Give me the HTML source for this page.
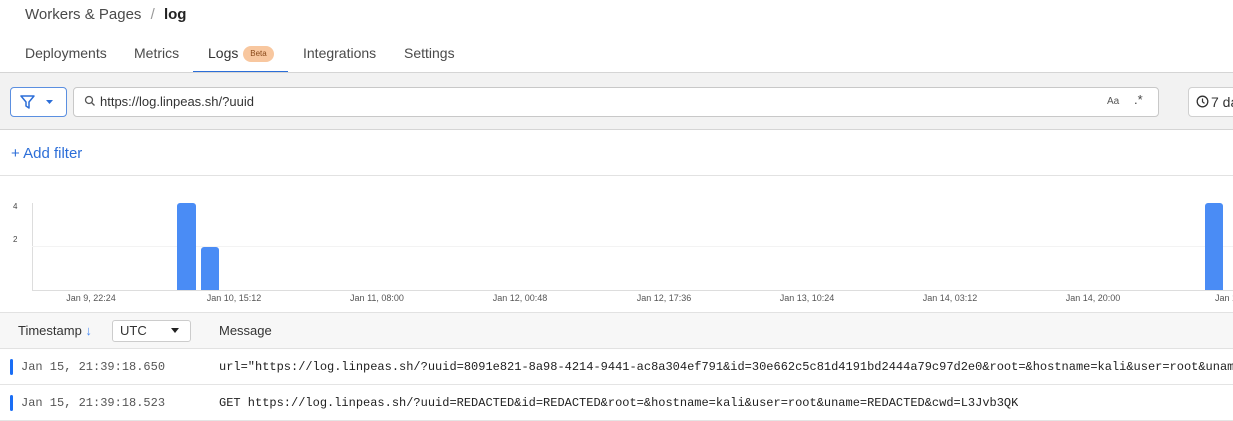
<!DOCTYPE html>
<html><head><meta charset="utf-8"><style>
*{box-sizing:border-box;margin:0;padding:0}
body{width:1233px;height:421px;overflow:hidden;background:#fff;font-family:"Liberation Sans",sans-serif;color:#36393a;position:relative}
.a{position:absolute;white-space:nowrap}
.mono{font-family:"Liberation Mono","DejaVu Sans Mono",monospace;font-size:12px;overflow:hidden}
.xl{font-size:9px;color:#555;top:293px;transform:translateX(-50%)}
.t{font-size:14px;color:#4a4a4a;top:45px}
</style></head><body>
<div class="a" style="left:25px;top:6px;font-size:15px;color:#4a4a4a">Workers &amp; Pages <span style="color:#999;margin:0 5px">/</span> <b style="color:#222">log</b></div>
<div class="a t" style="left:25px">Deployments</div>
<div class="a t" style="left:134px">Metrics</div>
<div class="a t" style="left:208px;color:#333">Logs</div>
<div class="a" style="left:243px;top:46px;width:31px;height:16px;border-radius:8px;background:#f8c79f;font-size:8px;color:#8a4a1a;text-align:center;line-height:16px">Beta</div>
<div class="a" style="left:193px;top:71px;width:95px;height:2px;background:#2c6ed8"></div>
<div class="a t" style="left:303px">Integrations</div>
<div class="a t" style="left:404px">Settings</div>
<div class="a" style="left:0;top:72px;width:1233px;height:58px;background:#f2f2f2;border-top:1px solid #d5d5d5;border-bottom:1px solid #d5d5d5"></div>
<div class="a" style="left:10px;top:87px;width:57px;height:30px;border:1px solid #5b8fe0;border-radius:4px;background:#fff"></div>
<svg class="a" style="left:20px;top:94px" width="40" height="16"><path d="M1 2h13l-5 6v6l-3-2v-4z" fill="none" stroke="#2c6ed8" stroke-width="1.5" stroke-linejoin="round"/><path d="M26 6h7l-3.5 4z" fill="#2c6ed8"/></svg>
<div class="a" style="left:73px;top:87px;width:1086px;height:30px;border:1px solid #c8c8c8;border-radius:4px;background:#fff"></div>
<svg class="a" style="left:84px;top:95px" width="12" height="12"><circle cx="5" cy="5" r="3.5" fill="none" stroke="#555" stroke-width="1.3"/><path d="M7.5 7.5l3 3" stroke="#555" stroke-width="1.3"/></svg>
<div class="a" style="left:100px;top:94px;font-size:13px;color:#333">https://log.linpeas.sh/?uuid</div>
<div class="a" style="left:1107px;top:96px;font-size:10px;color:#555">Aa</div>
<div class="a" style="left:1134px;top:92px;font-size:13px;color:#444">.*</div>
<div class="a" style="left:1188px;top:87px;width:60px;height:30px;border:1px solid #d0d0d0;border-radius:4px;background:#fff;font-size:14px;line-height:28px;padding-left:22px;color:#333;overflow:hidden">7 days</div>
<svg class="a" style="left:1196px;top:95px" width="13" height="13"><circle cx="6.5" cy="6.5" r="5.3" fill="none" stroke="#333" stroke-width="1.3"/><path d="M6.5 3.5v3.3l2 1.6" fill="none" stroke="#333" stroke-width="1.2"/></svg>
<div class="a" style="left:11px;top:145px;font-size:15px;color:#2c6ed8">+ Add filter</div>
<div class="a" style="left:0;top:175px;width:1233px;height:1px;background:#e2e2e2"></div>
<div class="a" style="left:13px;top:202px;font-size:8px;color:#444">4</div>
<div class="a" style="left:13px;top:235px;font-size:8px;color:#444">2</div>
<div class="a" style="left:32px;top:203px;width:1px;height:88px;background:#ddd"></div>
<div class="a" style="left:32px;top:246px;width:1201px;height:1px;background:#f3f3f3"></div>
<div class="a" style="left:32px;top:290px;width:1201px;height:1px;background:#ddd"></div>
<div class="a" style="left:177px;top:203px;width:19px;height:87px;background:#4a8cf5;border-radius:3px 3px 0 0"></div>
<div class="a" style="left:201px;top:247px;width:18px;height:43px;background:#4a8cf5;border-radius:3px 3px 0 0"></div>
<div class="a" style="left:1205px;top:203px;width:18px;height:87px;background:#4a8cf5;border-radius:3px 3px 0 0"></div>
<div class="a xl" style="left:91px">Jan 9, 22:24</div>
<div class="a xl" style="left:234px">Jan 10, 15:12</div>
<div class="a xl" style="left:377px">Jan 11, 08:00</div>
<div class="a xl" style="left:520px">Jan 12, 00:48</div>
<div class="a xl" style="left:664px">Jan 12, 17:36</div>
<div class="a xl" style="left:807px">Jan 13, 10:24</div>
<div class="a xl" style="left:950px">Jan 14, 03:12</div>
<div class="a xl" style="left:1093px">Jan 14, 20:00</div>
<div class="a xl" style="left:1215px;transform:none;width:18px;overflow:hidden">Jan 1</div>
<div class="a" style="left:0;top:312px;width:1233px;height:37px;background:#f7f7f7;border-top:1px solid #e2e2e2;border-bottom:1px solid #e2e2e2"></div>
<div class="a" style="left:18px;top:323px;font-size:13px;color:#333">Timestamp <span style="color:#4a8cf5">↓</span></div>
<div class="a" style="left:112px;top:320px;width:79px;height:22px;border:1px solid #ccc;border-radius:3px;background:#fff;font-size:13px;line-height:20px;padding-left:7px;color:#333">UTC</div>
<svg class="a" style="left:171px;top:328px" width="10" height="6"><path d="M0 0h8l-4 5z" fill="#222"/></svg>
<div class="a" style="left:219px;top:323px;font-size:13px;color:#333">Message</div>
<div class="a" style="left:0;top:384px;width:1233px;height:1px;background:#e4e4e4"></div>
<div class="a" style="left:0;top:420px;width:1233px;height:1px;background:#e4e4e4"></div>
<div class="a" style="left:10px;top:359px;width:3px;height:16px;background:#1a6ef5;border-radius:2px"></div>
<div class="a" style="left:10px;top:395px;width:3px;height:16px;background:#1a6ef5;border-radius:2px"></div>
<div class="a mono" style="left:21px;top:360px;color:#555">Jan 15, 21:39:18.650</div>
<div class="a mono" style="left:21px;top:396px;color:#555">Jan 15, 21:39:18.523</div>
<div class="a mono" style="left:219px;top:360px;width:1014px;color:#222">url="https://log.linpeas.sh/?uuid=8091e821-8a98-4214-9441-ac8a304ef791&amp;id=30e662c5c81d4191bd2444a79c97d2e0&amp;root=&amp;hostname=kali&amp;user=root&amp;uname=</div>
<div class="a mono" style="left:219px;top:396px;color:#222">GET https://log.linpeas.sh/?uuid=REDACTED&amp;id=REDACTED&amp;root=&amp;hostname=kali&amp;user=root&amp;uname=REDACTED&amp;cwd=L3Jvb3QK</div>
</body></html>
